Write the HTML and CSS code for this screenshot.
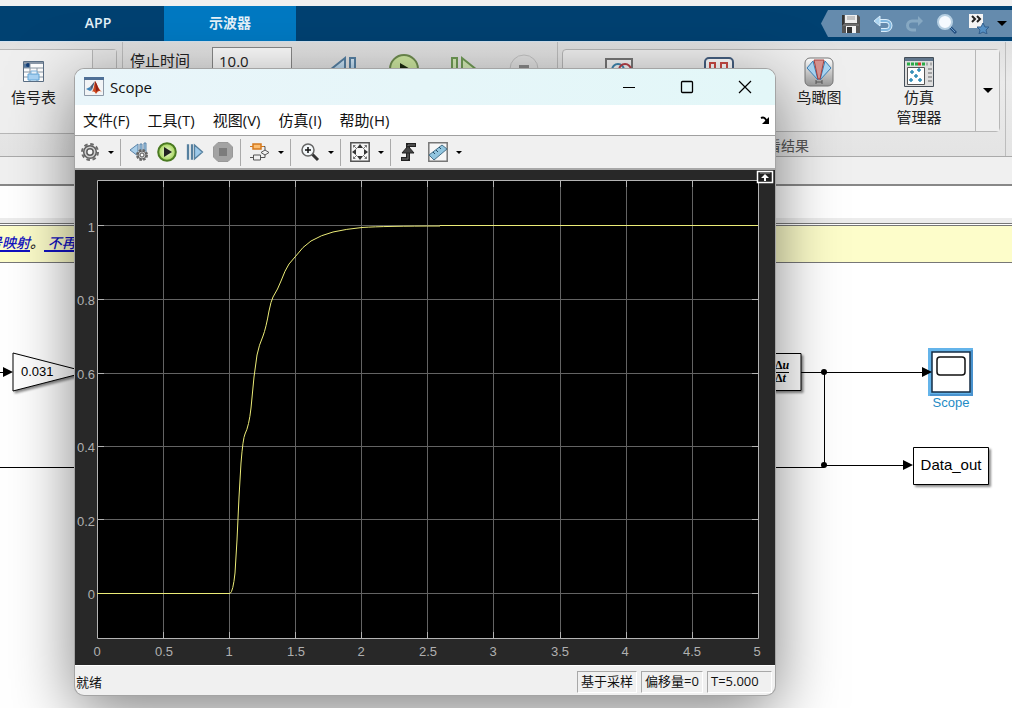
FILE: index.html
```html
<!DOCTYPE html>
<html lang="zh-CN">
<head>
<meta charset="utf-8">
<title>Scope</title>
<link rel="stylesheet" href="styles.css">
</head>
<body>
<main class="app">
  <header class="tabs">
    <nav class="tab-list">
      <a class="tab" href="#app">APP</a>
      <a class="tab tab-active" href="#scope">示波器</a>
    </nav>
    <div class="quick">
      <button class="quick-btn" aria-label="保存"><svg width="20" height="20" viewBox="0 0 20 20"><path d="M1 1h16l2 2v16H1z" fill="#555"/><path d="M1 1h2v10H1z" fill="#333"/><path d="M4 1h12v8H4z" fill="#eee"/><path d="M6 3h8M6 5h8" stroke="#999"/><path d="M2 11h16" stroke="#888"/><path d="M5 12h10v7H5z" fill="#f4f4f4"/><path d="M6 13h5v6H6z" fill="#333"/></svg></button>
      <button class="quick-btn" aria-label="撤销"><svg width="20" height="20" viewBox="0 0 20 20"><path d="M6 7h7a4 4 0 0 1 0 9H8" fill="none" stroke="#d8ecfa" stroke-width="4"/><path d="M6 7h7a4 4 0 0 1 0 9H8" fill="none" stroke="#7fb6de" stroke-width="2"/><path d="M7 2v10L1 7z" fill="#a9d3f0" stroke="#d8ecfa"/></svg></button>
      <button class="quick-btn" aria-label="重做"><svg width="20" height="20" viewBox="0 0 20 20"><path d="M14 7H7a4 4 0 0 0 0 9h4" fill="none" stroke="#86a8c2" stroke-width="3"/><path d="M13 2v10l5-5z" fill="#86a8c2"/></svg></button>
      <button class="quick-btn" aria-label="搜索"><svg width="20" height="20" viewBox="0 0 20 20"><path d="M12 12l7 7" stroke="#234f80" stroke-width="3"/><path d="M12 12l6 6" stroke="#6d9dcb" stroke-width="1"/><circle cx="8" cy="8" r="7" fill="#f5faff" stroke="#b5cfe2" stroke-width="2"/></svg></button>
      <button class="quick-btn" aria-label="收藏夹"><svg width="20" height="20" viewBox="0 0 20 20"><path d="M0 0h14v14H0z" fill="#f4f4f4"/><path d="M3 2l3 3-3 3M8 2l3 3-3 3" fill="none" stroke="#222" stroke-width="2"/><path d="M14 9l2 4h4l-3 3 1 4-4-2-4 2 1-4-3-3h4z" fill="#5590c4" stroke="#335f8d"/></svg></button>
      <button class="quick-more" aria-label="更多"><svg width="10" height="5" viewBox="0 0 10 5"><path d="M0 0h10L5 5z"/></svg></button>
    </div>
  </header>

  <section class="ribbon">
    <div class="group group-prepare">
      <div class="gallery">
        <button class="tool tool-signal"><svg width="21" height="21" viewBox="0 0 21 21"><path d="M.5.5h20v20H.5z" fill="#fff" stroke="#5b6f85"/><path d="M1 1h19v2H1z" fill="#8b98a8"/><path d="M1 3h6v4H1z" fill="#54789f"/><circle cx="5" cy="4" r="2" fill="#123d74"/><path d="M1 7h19M1 11h19M1 16h19M7 3v17M14 7v13" stroke="#8b98a5"/><path d="M5 13h11v6H5z" fill="#a9d4f5" stroke="#65a9dc"/><path d="M8 10h6v3H8z" fill="#eaf4fc" stroke="#7fb5df"/></svg>信号表</button>
        <button class="gallery-more" aria-label="展开"></button>
      </div>
    </div>
    <div class="group group-run">
      <label class="stop-label" for="stop">停止时间</label>
      <input class="stop-input" id="stop" value="10.0">
      <button class="run-btn" aria-label="步退"><svg width="30" height="30" viewBox="0 0 30 30"><defs><linearGradient id="bl" x2="0" y2="1"><stop stop-color="#d9ecfa"/><stop offset="1" stop-color="#8bbce0"/></linearGradient></defs><path d="M16 4v24L1 16zM21 4h5v24h-5z" fill="url(#bl)" stroke="#5681a4" stroke-width="2"/></svg></button>
      <button class="run-btn" aria-label="运行"><svg width="30" height="30" viewBox="0 0 30 30"><circle cx="15" cy="15" r="14" fill="#cfe9a2" stroke="#6f8d50" stroke-width="2"/><path d="M11 9l12 7-12 7z" fill="#1c2a10"/></svg></button>
      <button class="run-btn" aria-label="步进"><svg width="30" height="30" viewBox="0 0 30 30"><path d="M3 4h5v24H3zM13 4v24l15-12z" fill="#d7eeb9" stroke="#709c56" stroke-width="2"/></svg></button>
      <button class="run-btn" aria-label="停止" disabled><svg width="30" height="30" viewBox="0 0 30 30"><circle cx="15" cy="15" r="14" fill="#e3e3e3" stroke="#c3c3c3"/><path d="M10 11h10v9H10z" fill="#8a8a8a"/></svg></button>
    </div>
    <div class="group group-results">
      <div class="gallery">
        <button class="tool" aria-label="数据检查器"><svg width="30" height="30" viewBox="0 0 30 30"><path d="M2 2h26v24H2z" fill="#f8f8f8" stroke="#777" stroke-width="2"/><circle cx="14" cy="13" r="6" fill="none" stroke="#3f86b0" stroke-width="2"/><circle cx="21" cy="13" r="6" fill="none" stroke="#b84048" stroke-width="2"/></svg></button>
        <button class="tool" aria-label="逻辑分析仪"><svg width="30" height="30" viewBox="0 0 30 30"><rect x="1" y="1" width="28" height="28" rx="4" fill="#fff" stroke="#455f80" stroke-width="2"/><path d="M6 26V6h5v20M17 26V6h6v20" fill="none" stroke="#cc4b45" stroke-width="2"/></svg></button>
        <button class="tool"><svg width="30" height="30" viewBox="0 0 30 30"><defs><linearGradient id="bd" x2="0" y2="1"><stop stop-color="#fff"/><stop offset="1" stop-color="#999"/></linearGradient></defs><rect x="1" y="1" width="28" height="28" rx="5" fill="url(#bd)" stroke="#777"/><path d="M3 11l6-7 5 19z" fill="#a9d5f3" stroke="#3b7eb5"/><path d="M27 11l-6-7-5 19z" fill="#a9d5f3" stroke="#3b7eb5"/><path d="M10 3h10l-4 19h-2z" fill="#d79390" stroke="#a9413e"/><path d="M12 23v4M18 23v4M12 25h6" stroke="#555"/></svg>鸟瞰图</button>
        <button class="tool"><svg width="30" height="30" viewBox="0 0 30 30"><path d="M.5.5h29v29H.5z" fill="#dedede" stroke="#454f59"/><path d="M1 1h28v3H1z" fill="#60758a"/><path d="M3 7h11M18 7h3" stroke="#2bab47" stroke-width="3" stroke-dasharray="3 1"/><path d="M14 7h3" stroke="#d43a2c" stroke-width="3"/><path d="M22 7h6" stroke="#aaa" stroke-width="3" stroke-dasharray="2 2"/><path d="M3.500 10.500h17v17h-17z" fill="#fff" stroke="#555"/><path d="M6 15h4M8 13v4M13 13h4M15 11v4M10 19h4M12 17v4M5 23h4M7 21v4M14 23h4M16 21v4" stroke="#2c8bb5" stroke-width="1.500"/><path d="M24 12h4M24 16h4M24 20h4M24 24h4" stroke="#666"/></svg>仿真<br>管理器</button>
        <button class="gallery-more" aria-label="更多结果"><svg width="10" height="5" viewBox="0 0 10 5"><path d="M0 0h10L5 5z"/></svg></button>
      </div>
      <span class="group-name">查看结果</span>
    </div>
  </section>
  <div class="strip"></div>
  <div class="path-bar"></div>
  <p class="notice"><a href="#map">号映射</a>。<a href="#hide">&nbsp;不再</a></p>

  <section class="canvas">
    <svg class="diagram" width="1012" height="445" viewBox="0 263 1012 445">
      <defs><filter id="sh" x="-20%" y="-20%" width="150%" height="150%"><feDropShadow dx="2" dy="2" stdDeviation="1" flood-opacity=".45"/></filter></defs>
      <g fill="none" stroke="#000"><path d="M0 372.500h5M0 467.500h824M800 372.500h124M824.500 372v95M824 465.500h80"/></g>
      <path d="M3 367l10 5-10 5zM903 460l10 5-10 5z"/>
      <circle cx="824" cy="372" r="3"/><circle cx="824" cy="465" r="3"/>
      <path d="M13 353l74 19-74 19z" fill="#fff" stroke="#000" filter="url(#sh)"/>
      <text class="gain-text" x="21" y="376">0.031</text>
      <path d="M740 353.500h61v37h-61z" fill="#fff" stroke="#000" filter="url(#sh)"/>
      <g class="frac-text"><text x="775" y="369">Δ<tspan font-style="italic">u</tspan></text><text x="775" y="382">Δ<tspan font-style="italic">t</tspan></text></g>
      <path d="M770 372.500h19" stroke="#000"/>
      <path d="M928 348h45v48h-45z" fill="#64b4ea"/>
      <path d="M972 350v45h-42" fill="none" stroke="#4a93cf" stroke-width="2"/>
      <path d="M932 352h38v40h-38z" fill="#fff" stroke="#152c44" stroke-width="1.500"/>
      <rect x="937" y="357" width="28" height="18" rx="3" fill="#fff" stroke="#111" stroke-width="1.500"/>
      <path d="M922 367l10 5-10 5z"/>
      <text class="scope-text" x="951" y="407">Scope</text>
      <path d="M913.500 447.500h75v37h-75z" fill="#fff" stroke="#000" filter="url(#sh)"/>
      <text class="data-text" x="951" y="470">Data_out</text>
    </svg>
  </section>

  <section class="window" aria-label="Scope">
    <header class="title">
      <svg width="20" height="20" viewBox="0 0 20 20"><path d="M.5.5h19v18H.5z" fill="#f2f4f6" stroke="#8d99a8"/><path d="M0 0h20v3H0z" fill="#4f7097"/><path d="M2 12l4-2 2 3-2 1z" fill="#3f83b8"/><path d="M6 10l5-6-3 9z" fill="#4a5d7a"/><path d="M11 4c2 2 3 8 7 11-3-2-4-1-6 2-1-2-2-3-4-2 2-3 2-7 3-11z" fill="#d04a1e"/><path d="M11 4c2 2 3 8 5 10-2-1-3 0-4 1z" fill="#8f2018"/></svg>
      <h1 class="title-text">Scope</h1>
      <button class="win-btn" aria-label="最小化"><svg width="14" height="14" viewBox="0 0 14 14"><path d="M1 7.500h12" stroke="#000"/></svg></button>
      <button class="win-btn" aria-label="最大化"><svg width="14" height="14" viewBox="0 0 14 14"><rect x="1.500" y="1.500" width="11" height="11" rx="1" fill="none" stroke="#000" stroke-width="1.300"/></svg></button>
      <button class="win-btn" aria-label="关闭"><svg width="14" height="14" viewBox="0 0 14 14"><path d="M1 1l12 12M13 1L1 13" stroke="#000" stroke-width="1.200"/></svg></button>
    </header>
    <nav class="menu">
      <button class="menu-item">文件(F)</button>
      <button class="menu-item">工具(T)</button>
      <button class="menu-item">视图(V)</button>
      <button class="menu-item">仿真(I)</button>
      <button class="menu-item">帮助(H)</button>
      <button class="menu-dock" aria-label="停靠"><svg width="10" height="10" viewBox="0 0 10 10"><path d="M1 3q4-2 6 4" fill="none" stroke="#000" stroke-width="2"/><path d="M9 2v7H2z"/></svg></button>
    </nav>
    <div class="toolbar">
      <div class="set">
        <button class="icon" aria-label="配置"><svg width="20" height="20" viewBox="0 0 20 20"><circle cx="10" cy="10" r="8" fill="none" stroke="#6b6b6b" stroke-width="2" stroke-dasharray="3.600 2.683"/><circle cx="10" cy="10" r="6.300" fill="#d0d0d0" stroke="#5d5d5d" stroke-width="1.500"/><circle cx="10" cy="10" r="3.200" fill="#f5f5f5" stroke="#5d5d5d" stroke-width="1.500"/></svg></button>
        <button class="caret" aria-label="配置选项"><svg width="6" height="3" viewBox="0 0 6 3"><path d="M0 0h6L3 3z"/></svg></button>
      </div>
      <div class="set set-run">
        <button class="icon" aria-label="步进选项"><svg width="20" height="20" viewBox="0 0 20 20"><path d="M1 8l8-6v12zM11 2h2v9h-2zM15 1h2v9h-2z" fill="#a9cee8" stroke="#5a83a8"/><circle cx="13" cy="13" r="5" fill="#ccc" stroke="#666" stroke-width="2" stroke-dasharray="2.500 1.427"/><circle cx="13" cy="13" r="4" fill="#ccc" stroke="#5d5d5d"/><circle cx="13" cy="13" r="2" fill="#fff" stroke="#555"/></svg></button>
        <button class="icon" aria-label="运行"><svg width="20" height="20" viewBox="0 0 20 20"><defs><radialGradient id="pg"><stop stop-color="#f4ffe0"/><stop offset="1" stop-color="#9fd052"/></radialGradient></defs><circle cx="10" cy="10" r="8.800" fill="url(#pg)" stroke="#4a7a22" stroke-width="2"/><path d="M7 5l8 5-8 5z" fill="#222"/></svg></button>
        <button class="icon" aria-label="步进"><svg width="20" height="20" viewBox="0 0 20 20"><path d="M2.500 3h1v14h-1zM6.500 3h1v14h-1zM9.500 3v14l8-7z" fill="#9cc9ea" stroke="#56809f" stroke-width="1.300"/></svg></button>
        <button class="icon" aria-label="停止" disabled><svg width="20" height="20" viewBox="0 0 20 20"><path d="M5 .5h10l4.500 4.500v10l-4.500 4.500H5L.5 15V5z" fill="#a3a3a3" stroke="#999"/><path d="M6 6h8v8H6z" fill="#7c7c7c"/></svg></button>
      </div>
      <div class="set">
        <button class="icon" aria-label="突出显示模块"><svg width="20" height="20" viewBox="0 0 20 20"><path d="M0 4.500h15v5M0 15.500h15v-4" fill="none" stroke="#555"/><path d="M0 4.500h14" stroke="#d4781c"/><path d="M3 2h8v5H3z" fill="#fbbd71" stroke="#d4781c" stroke-width="1.500"/><path d="M3.500 13h7v5h-7z" fill="#f1f1f1" stroke="#555"/><path d="M11 10.500l4-2.500 4 2.500-4 2.500z" fill="#f1f1f1" stroke="#555"/></svg></button>
        <button class="caret" aria-label="模块选项"><svg width="6" height="3" viewBox="0 0 6 3"><path d="M0 0h6L3 3z"/></svg></button>
      </div>
      <div class="set">
        <button class="icon" aria-label="放大"><svg width="20" height="20" viewBox="0 0 20 20"><path d="M12 12l6 6" stroke="#333" stroke-width="3"/><circle cx="8" cy="8" r="6" fill="#f4f8fa" stroke="#666" stroke-width="1.500"/><path d="M8 5v6M5 8h6" stroke="#111" stroke-width="1.500"/></svg></button>
        <button class="caret" aria-label="缩放选项"><svg width="6" height="3" viewBox="0 0 6 3"><path d="M0 0h6L3 3z"/></svg></button>
      </div>
      <div class="set">
        <button class="icon" aria-label="缩放至适合"><svg width="20" height="20" viewBox="0 0 20 20"><path d="M.8.8h18.400v18.400H.8z" fill="#f6f6f6" stroke="#555" stroke-width="1.500"/><path d="M10 2l3 4H7zM10 18l3-4H7zM2 10l4-3v6zM18 10l-4-3v6z" fill="#333"/><path d="M3 3h3L3 6zM17 3h-3l3 3zM3 17h3l-3-3zM17 17h-3l3-3z" fill="#777"/><path d="M4 4l3 3M16 4l-3 3M4 16l3-3M16 16l-3-3" stroke="#777"/></svg></button>
        <button class="caret" aria-label="适合选项"><svg width="6" height="3" viewBox="0 0 6 3"><path d="M0 0h6L3 3z"/></svg></button>
      </div>
      <div class="set set-measure">
        <button class="icon" aria-label="触发器"><svg width="20" height="20" viewBox="0 0 20 20"><path d="M2 17h7V3h8" fill="none" stroke="#222" stroke-width="4"/><path d="M3 17h6V3h7" fill="none" stroke="#777"/><path d="M9 4l6 7H3z" fill="#444" stroke="#222"/></svg></button>
        <button class="icon" aria-label="测量"><svg width="20" height="20" viewBox="0 0 20 20"><path d="M.8.8h18.400v18.400H.8z" fill="#f6f6f6" stroke="#777" stroke-width="1.500"/><path d="M14 3l5 4L6 18l-5-5z" fill="#91c5df" stroke="#47718a"/><path d="M5 10l2 2M8 8l2 2M11 5l2 2" stroke="#234c64"/></svg></button>
        <button class="caret" aria-label="测量选项"><svg width="6" height="3" viewBox="0 0 6 3"><path d="M0 0h6L3 3z"/></svg></button>
      </div>
    </div>
    <svg class="plot" viewBox="0 0 700 495" role="img" aria-label="阶跃响应">
      <path d="M0 0h700v495H0z" fill="#282828"/>
      <path d="M22 10h661v459H22z" fill="#000"/>
      <path d="M88.500 11v457M154.500 11v457M220.500 11v457M286.500 11v457M352.500 11v457M418.500 11v457M485.500 11v457M551.500 11v457M617.500 11v457M23 55.500h660M23 129.500h660M23 203.500h660M23 276.500h660M23 349.500h660M23 423.500h660" stroke="#636363"/>
      <path d="M22.500 10.500h661v458h-661z" fill="none" stroke="#b4b4b4"/>
      <path d="M88.500 11v6M154.500 11v6M220.500 11v6M286.500 11v6M352.500 11v6M418.500 11v6M485.500 11v6M551.500 11v6M617.500 11v6M88.500 468v-6M154.500 468v-6M220.500 468v-6M286.500 468v-6M352.500 468v-6M418.500 468v-6M485.500 468v-6M551.500 468v-6M617.500 468v-6M23 55.500h6M23 129.500h6M23 203.500h6M23 276.500h6M23 349.500h6M23 423.500h6M683 55.500h-6M683 129.500h-6M683 203.500h-6M683 276.500h-6M683 349.500h-6M683 423.500h-6" stroke="#b4b4b4"/>
      <path d="M22 423.500H155Q158 422 160 403L162 370L164 327L166 293Q168 268 170 264Q174 256 176 238L179 207L182 185Q184 175 188 166Q191 158 194 141Q196 131 198 127Q203 119 206 111Q210 100 214 94L220 87Q228 76 236 71Q246 65 258 62Q271 59 287 57.500Q310 56 365 56V55.500H683" fill="none" stroke="#ecec78"/>
      <g class="ticks ticks-y"><text x="20" y="62">1</text><text x="20" y="135">0.8</text><text x="20" y="209">0.6</text><text x="20" y="282">0.4</text><text x="20" y="356">0.2</text><text x="20" y="429">0</text></g>
      <g class="ticks"><text x="22" y="486">0</text><text x="89" y="486">0.5</text><text x="154" y="486">1</text><text x="221" y="486">1.5</text><text x="286" y="486">2</text><text x="353" y="486">2.5</text><text x="418" y="486">3</text><text x="485" y="486">3.5</text><text x="550" y="486">4</text><text x="617" y="486">4.5</text><text x="682" y="486">5</text></g>
      <path d="M682.500 1.500h15v11h-15z" fill="#222" stroke="#fff" stroke-width="1.500"/><path d="M685 3h10" stroke="#999"/><path d="M690 4l4 4h-3v3h-2V8h-3z" fill="#fff"/>
    </svg>
    <footer class="status">
      <span class="status-text">就绪</span>
      <span class="cell cell-mode">基于采样</span>
      <span class="cell cell-offset">偏移量=0</span>
      <span class="cell cell-time">T=5.000</span>
    </footer>
  </section>
</main>
</body>
</html>
```

FILE: styles.css
```css
* { box-sizing: border-box; }
body { margin: 0; font: 15px/20px "Open Sans", "Noto Sans CJK SC", sans-serif; color: #222; }
button { border: 0; padding: 0; background: none; font: inherit; color: inherit; }
svg { display: block; flex: none; }
.app { position: relative; display: flex; flex-direction: column; min-height: 100vh; overflow: hidden; background: #fff; }

.tabs { display: flex; align-items: stretch; justify-content: space-between; height: 42px; border-top: 6px solid #f0f0f0; border-bottom: 1px solid #d3e2f0; background: #004171; }
.tab-list { display: flex; padding-left: 32px; }
.tab { width: 132px; font-size: 14px; line-height: 34px; font-weight: 600; color: #e4f1f8; text-align: center; text-decoration: none; }
.tab-active { background: #0079c2; }
.quick { display: flex; align-items: center; gap: 12px; margin: 4px 0; padding-left: 20px; background: #658bad; clip-path: polygon(0 50%, 7px 0, 100% 0, 100% 100%, 7px 100%); }
.quick-btn { width: 20px; height: 20px; }
.quick-more { margin-left: -4px; padding-right: 5px; }

.ribbon { display: flex; height: 115px; border-bottom: 1px solid #aaa; background: linear-gradient(#e0e0e0, #ebebeb 40px, #e4e4e4); }
.group { display: flex; padding-top: 7px; border-right: 1px solid #bdbdbd; }
.group-prepare { width: 123px; padding-right: 5px; }
.group-prepare .gallery { border-left: 0; border-radius: 0 4px 4px 0; }
.group-run { width: 435px; padding: 5px 0 0 7px; align-items: flex-start; }
.group-results { flex: 1; flex-direction: column; padding-left: 4px; padding-right: 5px; margin-right: 6px; align-items: stretch; }
.gallery { display: flex; flex: 1; max-height: 85px; border: 1px solid #b7b7b7; border-radius: 4px; background: #efefef; }
.tool { display: flex; flex: 1; flex-direction: column; align-items: center; padding-top: 7px; }
.tool-signal { flex: none; width: 92px; padding: 11px 25px 0 0; gap: 5px; white-space: nowrap; }
.group-results .tool { max-width: 100px; }
.group-results .gallery { padding-left: 6px; }
.gallery-more { display: flex; flex: 1; align-items: center; justify-content: center; border-left: 1px solid #b7b7b7; background: #e6e6e6; }
.group-results .gallery-more { flex: none; width: 24px; margin-left: auto; background: #efefef; }
.group-name { padding-top: 4px; font-size: 14px; color: #555; text-align: center; }
.stop-label { width: 82px; padding-top: 3px; }
.stop-input { width: 80px; height: 28px; padding: 0 6px; border: 1px solid #888; background: #fcfcfc; font: inherit; color: inherit; }
.run-btn { margin: 7px 0 0 28px; }
.stop-input + .run-btn { margin-left: 37px; }
.run-btn + .run-btn { margin-left: 30px; }
.strip { height: 29px; border-bottom: 2px solid #888; background: #f0f0f0; }
.path-bar { height: 38px; border-bottom: 1px solid #777; background: linear-gradient(#fff 32px, #ececec 32px); }
.notice { height: 39px; margin: 0; overflow: hidden; border-top: 1px solid #fff; border-bottom: 1px solid #777; background: #fdfdca; font-size: 14px; line-height: 36px; font-weight: 500; font-style: italic; white-space: nowrap; text-indent: -12px; box-shadow: inset 0 1px #777; }
.notice a { color: #1212c0; text-decoration-thickness: 2px; text-underline-offset: 2px; }
.canvas { flex: 1; position: relative; }
.gain-text { font: 13px "Liberation Sans", Arial, sans-serif; }
.frac-text { font: bold 12px "Liberation Serif", "Times New Roman", serif; }
.scope-text { font: 13px "Liberation Sans", Arial, sans-serif; fill: #238bc5; text-anchor: middle; }
.data-text { font: 15px "Liberation Sans", Arial, sans-serif; text-anchor: middle; }

.window { position: absolute; top: 69px; left: 75px; right: 237px; overflow: hidden; border-radius: 9px; background: #f0f0f0; box-shadow: 0 0 0 1px #a4a4a4, 0 16px 64px rgba(0, 0, 0, .5); }
.title { display: flex; align-items: center; height: 36px; padding: 0 1px 0 9px; background: linear-gradient(90deg, #e9f5fa, #e3f7f8); }
.title-text { flex: 1; margin: 0; padding-left: 6px; font-size: 15px; font-weight: 400; color: #111; }
.win-btn { display: flex; width: 58px; height: 36px; align-items: center; justify-content: center; }
.menu { display: flex; align-items: center; gap: 18px; height: 31px; padding: 0 5px 0 8px; border-bottom: 1px solid #a0a0a0; background: #fff; color: #111; }
.menu-dock { margin-left: auto; }
.toolbar { display: flex; align-items: center; height: 34px; padding-left: 5px; border-bottom: 2px solid #a8a8a8; background: #f0f0f0; }
.set { display: flex; align-items: center; height: 27px; }
.set + .set { padding-left: 9px; border-left: 1px solid #aaa; }
.icon { width: 20px; height: 20px; }
.caret { display: flex; width: 16px; height: 20px; margin: 0 1px 0 3px; align-items: center; justify-content: center; }
.set-run { gap: 8px; padding-right: 6px; }
.set + .set-run, .set + .set-measure { padding-left: 8px; }
.set-run { padding-right: 7px; }
.set-measure .icon + .icon { margin-left: 9px; }
.plot { width: 100%; height: auto; }
.ticks { font: 13px "Liberation Sans", Arial, sans-serif; fill: #b0b0b0; text-anchor: middle; }
.ticks-y { text-anchor: end; }
.status { display: flex; align-items: center; gap: 4px; height: 30px; padding: 3px 3px 0 1px; border-top: 1px solid #fff; font-size: 13px; color: #111; }
.status-text { flex: 1; }
.cell { height: 22px; line-height: 18px; padding-left: 3px; border: 1px solid #fff; border-top-color: #a8a8a8; border-left-color: #a8a8a8; white-space: nowrap; }
.cell-mode { width: 60px; }
.cell-offset { width: 62px; }
.cell-time { width: 65px; }
```
